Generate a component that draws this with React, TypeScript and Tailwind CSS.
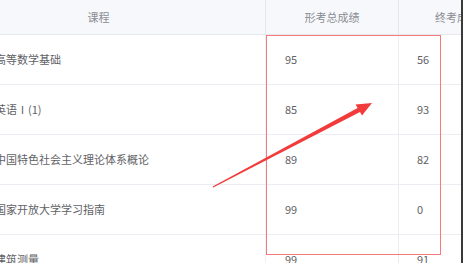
const ROWS = [
  { name: '高等数学基础', form: '95', final: '56' },
  { name: '英语Ⅰ(1)', form: '85', final: '93' },
  { name: '中国特色社会主义理论体系概论', form: '89', final: '82' },
  { name: '国家开放大学学习指南', form: '99', final: '0' },
  { name: '建筑测量', form: '99', final: '91' },
];

export default function App() {
  return (
    <div className="w-[465px] h-[280px] bg-white overflow-hidden" style={{ fontFamily: '"Noto Sans CJK SC", "Noto Sans", sans-serif' }}>
      <div className="relative w-[463px] h-[263px] overflow-hidden border-r-2 border-[#3a3a3a]">
        <div className="-ml-[68px] w-[600px] text-[11px]">
          {/* header */}
          <div className="flex h-[35px] bg-[#f7f8fb] border-b border-[#e6e8ee] text-[#8a8d93]">
            <div className="w-[334px] flex items-center justify-center border-r border-[#e6e8ee]">课程</div>
            <div className="w-[133px] flex items-center justify-center border-r border-[#e6e8ee]">形考总成绩</div>
            <div className="w-[116px] flex items-center justify-center">终考成绩</div>
          </div>
          {ROWS.map((r) => (
            <div key={r.name} className="flex h-[50px] border-b border-[#ebedf2] text-[#5f6266]">
              <div className="w-[334px] pl-[63px] flex items-center border-r border-[#f0f1f4]">{r.name}</div>
              <div className="w-[133px] pl-[19px] flex items-center border-r border-[#ebedf2]">{r.form}</div>
              <div className="w-[116px] pl-[18px] flex items-center">{r.final}</div>
            </div>
          ))}
        </div>

        {/* annotation box */}
        <div className="absolute left-[266px] top-[35px] w-[175px] h-[220px] border-[1.5px] border-[#f77a7a]" />

        {/* annotation arrow */}
        <svg className="absolute left-0 top-0" width="465" height="263" viewBox="0 0 465 263">
          <polygon
            points="212.7,186.5 357.6,107.9 355.6,104.4 372,103 362,115.6 360,112.1 213.3,187.5"
            fill="#f23b3b"
          />
        </svg>
      </div>
    </div>
  );
}
